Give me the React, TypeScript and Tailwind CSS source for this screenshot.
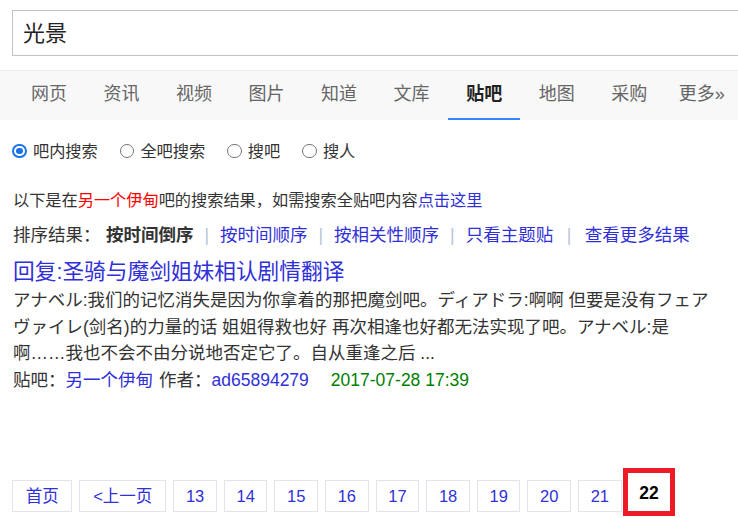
const tabs = ['网页', '资讯', '视频', '图片', '知道', '文库', '贴吧', '地图', '采购', '更多»'];
const radios = ['吧内搜索', '全吧搜索', '搜吧', '搜人'];
const pages = ['13', '14', '15', '16', '17', '18', '19', '20', '21'];

function Sep({ wide }: { wide?: boolean }) {
  return <span className={`${wide ? 'mx-[13.5px]' : 'mx-[11px]'} text-[#b8c4d8]`}>|</span>;
}

export default function App() {
  return (
    <div className="w-[738px] h-[518px] overflow-hidden bg-white text-[#333] font-['Liberation_Sans','Noto_Sans_CJK_SC',sans-serif]">
      {/* search box */}
      <div className="pt-[10px] pl-[12px]">
        <div className="h-[46px] w-[760px] border border-[#c2c2c2] flex items-center pl-[10px] text-[22px] text-[#222]">
          光景
        </div>
      </div>

      {/* tabs */}
      <nav className="mt-[14px] h-[50px] bg-[#f8f8f8] border-t border-[#ececec] flex pl-[12.7px]">
        {tabs.map((t) => (
          <div
            key={t}
            className={`relative w-[72.7px] pb-[3px] flex items-center justify-center text-[18px] ${
              t === '贴吧' ? 'font-bold text-[#222]' : 'text-[#666]'
            }`}
          >
            {t}
            {t === '贴吧' && <span className="absolute left-0 right-0 bottom-0 h-[2.5px] bg-[#3385ff]" />}
          </div>
        ))}
      </nav>

      {/* radio options */}
      <div className="mt-[16px] h-[30px] flex items-center pl-[12.3px] text-[16.2px]">
        {radios.map((r, i) => (
          <div key={r} className={`flex items-center ${i > 0 ? 'ml-[22px]' : ''}`}>
            {i === 0 ? (
              <span className="w-[14.5px] h-[14.5px] rounded-full border-[2px] border-[#1a73e8] flex items-center justify-center">
                <span className="w-[6.5px] h-[6.5px] rounded-full bg-[#1a73e8]" />
              </span>
            ) : (
              <span className="w-[14.5px] h-[14.5px] rounded-full border-[1.5px] border-[#767676]" />
            )}
            <span className="ml-[6.2px]">{r}</span>
          </div>
        ))}
      </div>

      {/* scope hint */}
      <div className="mt-[21px] h-[26px] flex items-center pl-[13px] text-[16.2px] whitespace-nowrap">
        以下是在<span className="text-[#f00]">另一个伊甸</span>吧的搜索结果，如需搜索全贴吧内容
        <span className="text-[#3030d8]">点击这里</span>
      </div>

      {/* sort */}
      <div className="mt-[9px] h-[26px] flex items-center pl-[13px] text-[17.5px] whitespace-nowrap">
        <span>排序结果：</span>
        <span className="ml-[5.5px] font-bold text-[#333]">按时间倒序</span>
        <Sep />
        <span className="text-[#3030d8]">按时间顺序</span>
        <Sep />
        <span className="text-[#3030d8]">按相关性顺序</span>
        <Sep />
        <span className="text-[#3030d8]">只看主题贴</span>
        <Sep wide />
        <span className="text-[#3030d8]">查看更多结果</span>
      </div>

      {/* result */}
      <div className="mt-[11px] h-[26px] flex items-center pl-[13px] text-[21.7px] text-[#3030d8] whitespace-nowrap">
        回复:圣骑与魔剑姐妹相认剧情翻译
      </div>
      <div className="mt-[2.2px] pl-[13px] text-[17.5px] leading-[26.6px] whitespace-nowrap">
        <div>アナベル:我们的记忆消失是因为你拿着的那把魔剑吧。ディアドラ:啊啊 但要是没有フェア</div>
        <div>ヴァイレ(剑名)的力量的话 姐姐得救也好 再次相逢也好都无法实现了吧。アナベル:是</div>
        <div>啊……我也不会不由分说地否定它了。自从重逢之后 ...</div>
        <div className="flex">
          <span>贴吧：</span>
          <span className="text-[#3030d8]">另一个伊甸</span>
          <span className="ml-[6px]">作者：</span>
          <span className="text-[#3030d8]">ad65894279</span>
          <span className="ml-[22px] text-[#008000]">2017-07-28 17:39</span>
        </div>
      </div>

      {/* pagination */}
      <div className="mt-[74.4px] flex items-end gap-[7px] pl-[12.3px] text-[16.5px] text-[#3030d8]">
        <div className="mb-[4px] w-[60px] h-[32px] border border-[#e1e4ea] flex items-center justify-center">首页</div>
        <div className="mb-[4px] w-[87px] h-[32px] border border-[#e1e4ea] flex items-center justify-center">&lt;上一页</div>
        {pages.map((p) => (
          <div key={p} className="mb-[4px] w-[43.6px] h-[32px] border border-[#e1e4ea] flex items-center justify-center">
            {p}
          </div>
        ))}
        <div className="-ml-[5.7px] w-[52px] h-[48px] pt-[3px] border-[5px] border-[#ed1c24] flex items-center justify-center text-[17.5px] font-bold text-black">
          22
        </div>
      </div>
    </div>
  );
}
